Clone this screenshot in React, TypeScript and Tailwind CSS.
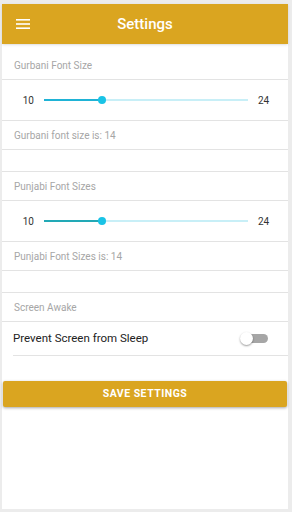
import React from "react";

function Slider({ active }: { active: string }) {
  return (
    <div className="flex items-center h-[41px] border-b border-[#e3e3e3]">
      <span className="w-[42px] text-right pr-[10px] text-[10px] text-[#333]">10</span>
      <div className="relative w-[204px] h-[8px] flex items-center">
        <div className="absolute left-0 right-0 h-[2px] bg-[#c8eff7]" />
        <div className={`absolute left-0 w-[58px] h-[2px] ${active}`} />
        <div className="absolute left-[54px] w-[8px] h-[8px] rounded-full bg-[#19c3e6]" />
      </div>
      <span className="pl-[10px] text-[10px] text-[#333]">24</span>
    </div>
  );
}

function Label({ children }: { children: React.ReactNode }) {
  return (
    <div className="h-[29px] flex items-center px-[12px] border-b border-[#e3e3e3] text-[10px] text-[#a6a6a6]">
      {children}
    </div>
  );
}

function Empty() {
  return <div className="h-[22px] border-b border-[#e3e3e3]" />;
}

export default function App() {
  return (
    <div
      className="w-[292px] h-[512px] bg-[#ececec] pt-[4px] pl-[2px] pr-[4px] pb-[3px]"
      style={{ fontFamily: "Roboto, 'Liberation Sans', sans-serif" }}
    >
      <div className="h-full bg-white flex flex-col">
        <div className="h-[40px] bg-[#daa520] flex items-center relative shadow-sm">
          <svg className="absolute left-[13px]" width="16" height="12" viewBox="0 0 16 12">
            <rect x="1" y="1" width="14" height="1.6" fill="#fff" />
            <rect x="1" y="5.2" width="14" height="1.6" fill="#fff" />
            <rect x="1" y="9.4" width="14" height="1.6" fill="#fff" />
          </svg>
          <div className="flex-1 text-center text-white text-[15px] font-medium pt-[1px]">Settings</div>
        </div>
        <div className="pt-[7px]">
          <Label>Gurbani Font Size</Label>
          <Slider active="bg-[#1fb3d6]" />
          <Label>Gurbani font size is: 14</Label>
          <Empty />
          <Label>Punjabi Font Sizes</Label>
          <Slider active="bg-[#22a9b6]" />
          <Label>Punjabi Font Sizes is: 14</Label>
          <Empty />
          <Label>Screen Awake</Label>
          <div className="ml-[11px] h-[34px] border-b border-[#e3e3e3] flex items-center justify-between">
            <span className="text-[11.5px] text-[#222]">Prevent Screen from Sleep</span>
            <div className="relative w-[28px] h-[14px] mr-[20px] flex items-center">
              <div className="absolute left-[3px] right-0 h-[9px] rounded-full bg-[#a6a6a6]" />
              <div className="absolute left-0 w-[13px] h-[13px] rounded-full bg-white shadow-[0_1px_2px_rgba(0,0,0,0.4)]" />
            </div>
          </div>
        </div>
        <div className="mt-[25px] mx-[1px] h-[26px] bg-[#daa520] rounded-[2px] shadow-[0_1px_3px_rgba(0,0,0,0.35)] flex items-center justify-center">
          <span className="text-white text-[10.5px] font-bold tracking-[0.5px]">SAVE SETTINGS</span>
        </div>
      </div>
    </div>
  );
}
